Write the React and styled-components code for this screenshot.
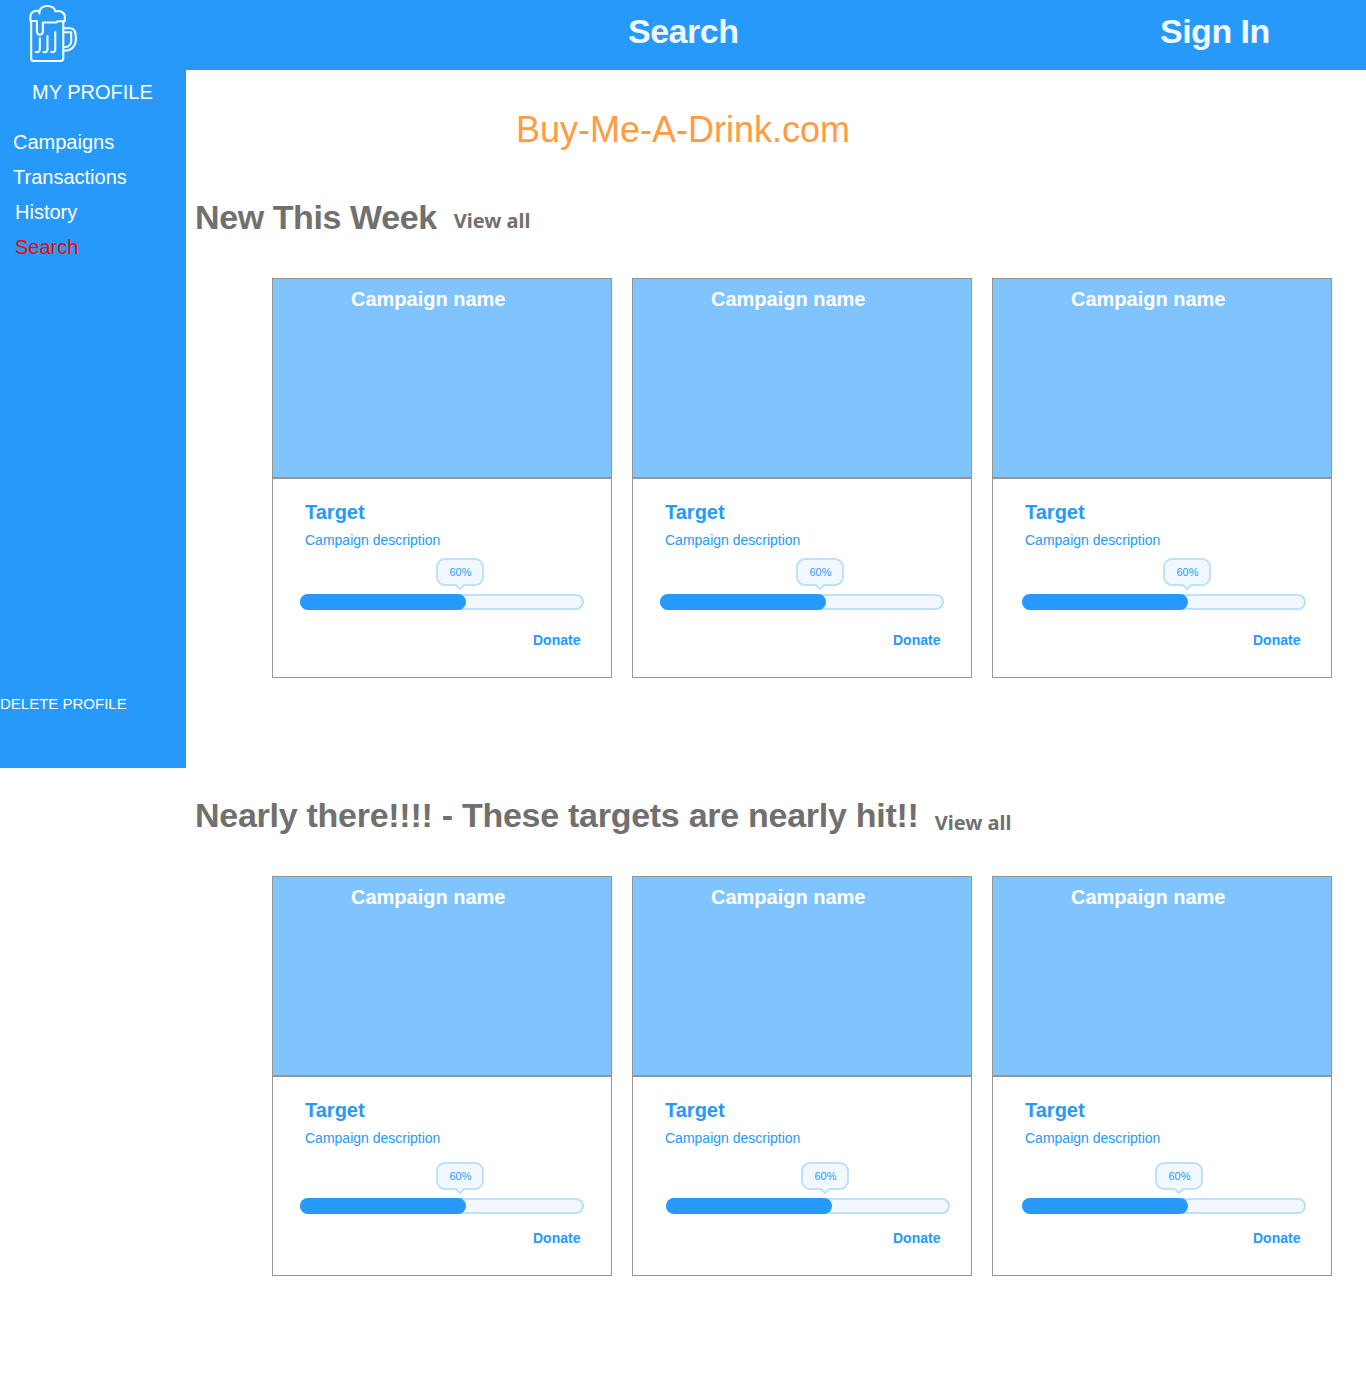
import React from 'react';
import styled, { createGlobalStyle } from 'styled-components';

const GlobalStyle = createGlobalStyle`
  * { box-sizing: border-box; }
  body { margin: 0; background: #fff; font-family: "Liberation Sans", Arial, sans-serif; }
  h1, h2, h3, p { margin: 0; }
`;

const blue = '#2699fb';

const Page = styled.div`
  width: 1366px;
  height: 1390px;
  overflow: hidden;
`;

const TopBar = styled.header`
  display: grid;
  grid-template-columns: 591px 184px 1fr;
  height: 70px;
  background: ${blue};
`;

const LogoSlot = styled.div`
  padding: 4px 0 0 28px;
`;

const TopLink = styled.a`
  padding-top: 11px;
  padding-left: ${(p) => p.$indent}px;
  color: #f1f7ff;
  font-size: 34px;
  font-weight: 700;
  line-height: 40px;
  letter-spacing: -0.5px;
  white-space: nowrap;
`;

const Body = styled.div`
  display: flex;
  align-items: flex-start;
`;

const Sidebar = styled.nav`
  display: flex;
  flex-direction: column;
  width: 186px;
  height: 698px;
  padding-top: 10px;
  background: ${blue};
  color: #fff;
`;

const ProfileTitle = styled.p`
  padding-left: 32px;
  font-size: 20px;
  line-height: 24px;
`;

const NavList = styled.div`
  display: flex;
  flex-direction: column;
  gap: 11px;
  padding-top: 26px;
`;

const NavItem = styled.a`
  padding-left: ${(p) => p.$indent}px;
  color: ${(p) => (p.$active ? '#ff0000' : '#fff')};
  font-size: 20px;
  line-height: 24px;
`;

const DeleteProfile = styled.p`
  margin-top: auto;
  padding-bottom: 54px;
  font-size: 15px;
  line-height: 20px;
`;

const Main = styled.main`
  flex: 1;
`;

const SiteName = styled.h1`
  padding: 39px 0 0 330px;
  height: 118px;
  color: #ff9b42;
  font-size: 36px;
  font-weight: 400;
  line-height: 42px;
`;

const Section = styled.section`
  height: 598px;
`;

const SectionHead = styled.div`
  display: flex;
  gap: ${(p) => p.$gap}px;
  height: 90px;
  padding: 9px 0 0 9px;
  color: #707070;
`;

const SectionTitle = styled.h2`
  font-size: 34px;
  font-weight: 700;
  line-height: 40px;
  letter-spacing: ${(p) => p.$spacing}px;
  white-space: nowrap;
`;

const ViewAll = styled.a`
  padding-top: ${(p) => p.$drop}px;
  font-family: "Noto Sans", "Open Sans", sans-serif;
  font-size: 20px;
  font-weight: 700;
  line-height: 28px;
`;

const CardRow = styled.div`
  display: flex;
  gap: 20px;
  padding-left: 86px;
`;

const CardBox = styled.article`
  width: 340px;
  height: 400px;
`;

const CardCover = styled.div`
  height: 200px;
  padding: 8px 0 0 78px;
  border: 1px solid #959595;
  background: #7fc4ff;
  color: #fff;
  font-size: 20px;
  font-weight: 700;
  line-height: 24px;
`;

const CardBody = styled.div`
  display: flex;
  flex-direction: column;
  height: 200px;
  padding: 21px 0 0;
  border: 1px solid #959595;
  background: #fff;
  color: ${blue};
`;

const Target = styled.h3`
  padding-left: 32px;
  font-size: 20px;
  font-weight: 700;
  line-height: 24px;
`;

const Description = styled.p`
  padding: 7px 0 0 32px;
  font-size: 14px;
  line-height: 18px;
`;

const Meter = styled.div`
  display: flex;
  flex-direction: column;
  height: 82px;
  padding-top: ${(p) => p.$drop}px;
`;

const Bubble = styled.div`
  position: relative;
  width: 48px;
  height: 28px;
  margin-left: ${(p) => p.$left}px;
  padding-left: 1px;
  border: 2px solid #bce0fd;
  border-radius: 9px;
  background: #f1f9ff;
  font-size: 11px;
  line-height: 25px;
  text-align: center;
`;

const BubbleTip = styled.svg`
  position: absolute;
  left: 17px;
  top: 23px;
`;

const Track = styled.div`
  width: 284px;
  height: 16px;
  margin: 8px 0 0 ${(p) => p.$left}px;
  border-radius: 8px;
  box-shadow: inset 0 0 0 2px #bce0fd;
  background: #f1f9ff;
`;

const Fill = styled.div`
  height: 16px;
  border-radius: 8px;
  background: ${blue};
`;

const Donate = styled.a`
  padding-left: 260px;
  font-size: 14px;
  font-weight: 700;
  line-height: 18px;
`;

function BeerLogo() {
  return (
    <svg width="50" height="60" viewBox="28 4 50 60" fill="none" stroke="#fafdff" strokeWidth="2.1" strokeLinecap="round" strokeLinejoin="round">
      <path d="M30.400 21v-4.500c0-4 5-7.300 9-5 1.500-7 14-7.500 16.200 0 4.500-1.600 9.200 1.200 9.200 5V21" />
      <path d="M39.400 11.500V13.500" />
      <path d="M31.200 21v37.500c0 1.700.7 2.500 2.300 2.500H60.500c1.700 0 2.800-1 2.800-2.700V21" />
      <path d="M31.200 21H36.900V31c0 5 6 5 6 0v-8.500H56l2-1.300H64.800" />
      <path d="M64 28.200h6.500c4 0 5.400 3.500 5.400 9.800 0 9-5 12.700-12 12.700" />
      <path d="M64 32.200h7.200v9c0 4-3.200 6-7.200 6" />
      <path d="M39.800 38v11.500c0 2-1.500 3-4 2.500M47.500 36v13.500c0 2-1.500 3-4 2.500M55.300 32v17.500c0 2-1.500 3-4 2.500" />
    </svg>
  );
}

function Card({ bar = 27, bubble = 163, drop }) {
  return (
    <CardBox>
      <CardCover>Campaign name</CardCover>
      <CardBody>
        <Target>Target</Target>
        <Description>Campaign description</Description>
        <Meter $drop={drop}>
          <Bubble $left={bubble}>
            60%
            <BubbleTip width="10" height="8" viewBox="0 0 10 8">
              <path d="M0.500 0H9.500V2L5 6.300L0.500 2Z" fill="#f1f9ff" />
              <path d="M0.500 1.800L5 6.200L9.500 1.800" fill="none" stroke="#bce0fd" strokeWidth="2" />
            </BubbleTip>
          </Bubble>
          <Track $left={bar}>
            <Fill style={{ width: 166 }} />
          </Track>
        </Meter>
        <Donate>Donate</Donate>
      </CardBody>
    </CardBox>
  );
}

export default function App() {
  return (
    <Page>
      <GlobalStyle />
      <TopBar>
        <LogoSlot><BeerLogo /></LogoSlot>
        <TopLink $indent={37}>Search</TopLink>
        <TopLink $indent={385}>Sign In</TopLink>
      </TopBar>
      <Body>
        <Sidebar>
          <ProfileTitle>MY PROFILE</ProfileTitle>
          <NavList>
            <NavItem $indent={13}>Campaigns</NavItem>
            <NavItem $indent={13}>Transactions</NavItem>
            <NavItem $indent={15}>History</NavItem>
            <NavItem $indent={15} $active>Search</NavItem>
          </NavList>
          <DeleteProfile>DELETE PROFILE</DeleteProfile>
        </Sidebar>
        <Main>
          <SiteName>Buy-Me-A-Drink.com</SiteName>
          <Section>
            <SectionHead $gap={17}>
              <SectionTitle $spacing={-0.4}>New This Week</SectionTitle>
              <ViewAll $drop={10}>View all</ViewAll>
            </SectionHead>
            <CardRow>
              <Card drop={9} />
              <Card drop={9} />
              <Card drop={9} bar={29} bubble={170} />
            </CardRow>
          </Section>
          <Section>
            <SectionHead $gap={16}>
              <SectionTitle $spacing={-0.27}>Nearly there!!!! - These targets are nearly hit!!</SectionTitle>
              <ViewAll $drop={14}>View all</ViewAll>
            </SectionHead>
            <CardRow>
              <Card drop={15} />
              <Card drop={15} bar={33} bubble={168} />
              <Card drop={15} bar={29} bubble={162} />
            </CardRow>
          </Section>
        </Main>
      </Body>
    </Page>
  );
}
